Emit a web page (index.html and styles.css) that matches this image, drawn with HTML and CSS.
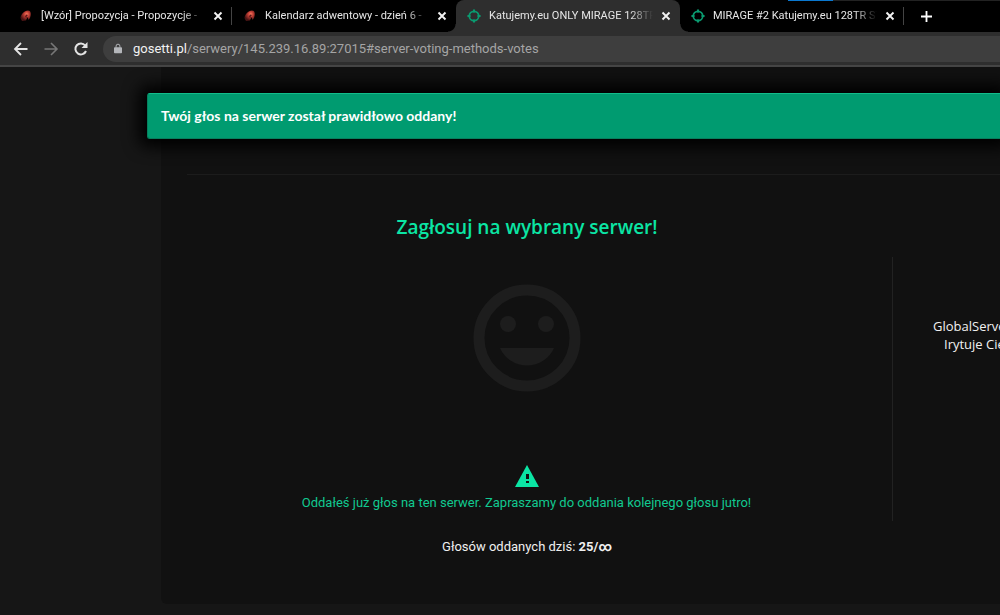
FILE: index.html
```html
<!DOCTYPE html>
<html lang="pl">
<head>
<meta charset="utf-8">
<title>Katujemy.eu ONLY MIRAGE 128TR</title>
<link rel="stylesheet" href="styles.css">
</head>
<body>
<svg class="sprite" aria-hidden="true">
  <defs>
    <radialGradient id="ember" cx="0.6" cy="0.35" r="0.6">
      <stop offset="0" stop-color="#ff7a60"/>
      <stop offset="0.45" stop-color="#b83a32"/>
      <stop offset="1" stop-color="#4a1414"/>
    </radialGradient>
    <symbol id="flame" viewBox="0 0 14 14">
      <path d="M1.500 9C2 5 5 2 9 1.500C12 1.500 12.500 5 11 9L9.500 11L8.500 8L7 11.500L3 12Z" fill="url(#ember)"/>
      <path d="M7 5.500L9 6L7.500 7.500L8 9L6 8Z" fill="#5a1818"/>
    </symbol>
    <symbol id="target" viewBox="0 0 16 16">
      <circle cx="8" cy="8" r="5.400" fill="none" stroke="#0a9b70" stroke-width="2"/>
      <path d="M8 0.500V4M8 12V15.500M0.500 8H4M12 8H15.500" stroke="#0a9b70" stroke-width="2.400"/>
    </symbol>
    <symbol id="close" viewBox="0 0 10 10">
      <path d="M1.500 1.500L8.500 8.500M8.500 1.500L1.500 8.500" stroke="#f2f2f2" stroke-width="1.900"/>
    </symbol>
  </defs>
</svg>

<header class="browser">
  <nav class="tabs" aria-label="Karty">
    <div class="tab">
      <svg class="favicon"><use href="#flame"/></svg>
      <a class="tab-title" href="#t1">[Wzór] Propozycja - Propozycje -</a>
      <button class="close" aria-label="Zamknij kartę"><svg><use href="#close"/></svg></button>
    </div>
    <div class="tab tab-before-active">
      <svg class="favicon"><use href="#flame"/></svg>
      <a class="tab-title" href="#t2">Kalendarz adwentowy - dzień 6 -</a>
      <button class="close" aria-label="Zamknij kartę"><svg><use href="#close"/></svg></button>
    </div>
    <div class="tab tab-active">
      <svg class="favicon"><use href="#target"/></svg>
      <a class="tab-title" href="#t3">Katujemy.eu ONLY MIRAGE 128TR</a>
      <button class="close" aria-label="Zamknij kartę"><svg><use href="#close"/></svg></button>
    </div>
    <div class="tab">
      <svg class="favicon"><use href="#target"/></svg>
      <a class="tab-title" href="#t4">MIRAGE #2 Katujemy.eu 128TR ST</a>
      <button class="close" aria-label="Zamknij kartę"><svg><use href="#close"/></svg></button>
    </div>
    <button class="new-tab" aria-label="Nowa karta">
      <svg viewBox="0 0 12 12"><path d="M6 0V12M0 6H12" stroke="#fff" stroke-width="2"/></svg>
    </button>
    <span class="window-edge"></span>
  </nav>
  <div class="toolbar">
    <button class="nav-button" aria-label="Wstecz">
      <svg viewBox="0 0 16 16"><path d="M14.500 8H2.500M8 2L2 8L8 14" fill="none" stroke="#e4e4e4" stroke-width="1.800"/></svg>
    </button>
    <button class="nav-button" aria-label="Dalej">
      <svg viewBox="0 0 16 16"><path d="M1.500 8H13.500M8 2L14 8L8 14" fill="none" stroke="#777" stroke-width="1.600"/></svg>
    </button>
    <button class="nav-button" aria-label="Odśwież">
      <svg viewBox="0 0 16 16"><path d="M13 10A5.500 5.500 0 1 1 12.200 4.500" fill="none" stroke="#e4e4e4" stroke-width="2"/><path d="M14.500 1V7H8.500Z" fill="#e4e4e4"/></svg>
    </button>
    <div class="address">
      <svg class="lock" viewBox="0 0 10 12"><path d="M1 4.500H9A1 1 0 0 1 10 5.500V11A1 1 0 0 1 9 12H1A1 1 0 0 1 0 11V5.500A1 1 0 0 1 1 4.500Z" fill="#b4b6ba"/><path d="M2.600 5V3A2.400 2.400 0 0 1 7.400 3V5" fill="none" stroke="#b4b6ba" stroke-width="1.200"/></svg>
      <a class="url" href="#server-voting-methods-votes"><span class="host">gosetti.pl</span>/serwery/145.239.16.89:27015#server-voting-methods-votes</a>
    </div>
  </div>
</header>

<main class="page">
  <div class="toast" role="status">Twój głos na serwer został prawidłowo oddany!</div>
  <section class="panel">
    <hr class="rule">
    <div class="columns">
      <div class="vote">
        <h1 class="title">Zagłosuj na wybrany serwer!</h1>
        <div class="vote-body">
          <svg class="smile" viewBox="0 0 108 108" aria-hidden="true">
            <circle cx="54" cy="54" r="48" fill="none" stroke="#1d1d1d" stroke-width="11"/>
            <circle cx="35" cy="40" r="8" fill="#1d1d1d"/>
            <circle cx="73" cy="40" r="8" fill="#1d1d1d"/>
            <path d="M27 64H81A29.500 29.500 0 0 1 27 64Z" fill="#1d1d1d"/>
          </svg>
          <svg class="warning" viewBox="0 0 24 22" aria-hidden="true">
            <path d="M12 0L24 22H0Z" fill="#0be5a4"/>
            <path d="M11 9H14V14H11ZM11 16H14V18H11Z" fill="#111"/>
          </svg>
          <p class="notice">Oddałeś już głos na ten serwer. Zapraszamy do oddania kolejnego głosu jutro!</p>
        </div>
        <p class="count">Głosów oddanych dziś: <strong>25/∞</strong></p>
      </div>
      <aside class="ad">
        <p>GlobalServe</p>
        <p class="ad-second">Irytuje Cię</p>
      </aside>
    </div>
  </section>
</main>
</body>
</html>
```
FILE: styles.css
```css
* { box-sizing: border-box; }
body {
  margin: 0;
  min-height: 100vh;
  display: flex;
  flex-direction: column;
  overflow: hidden;
  background: #161616;
  color: #f0f0f0;
  font: 13px/18px Roboto, "Noto Sans", sans-serif;
}
button { border: 0; padding: 0; background: none; }
a { color: inherit; text-decoration: none; }
p { margin: 0; }
svg { display: block; }
.sprite { position: absolute; width: 0; height: 0; }

.tabs {
  position: relative;
  display: flex;
  height: 32px;
  padding-left: 8px;
  background: #000;
}
.tab {
  position: relative;
  flex: 0 1 224px;
  min-width: 0;
  display: flex;
  align-items: center;
  gap: 8px;
  padding: 0 9px 0 11px;
}
.tab::after {
  content: "";
  position: absolute;
  right: 0;
  top: 7px;
  width: 1px;
  height: 18px;
  background: #444;
}
.tab-before-active::after, .tab-active::after { display: none; }
.tab-active { background: #2e2e2e; border-radius: 8px 8px 0 0; }
.tab-active::before {
  content: "";
  position: absolute;
  left: -8px;
  right: -8px;
  bottom: 0;
  height: 8px;
  background:
    radial-gradient(circle at 0 0, #000 7px, #2e2e2e 8px) left / 8px 8px no-repeat,
    radial-gradient(circle at 100% 0, #000 7px, #2e2e2e 8px) right / 8px 8px no-repeat;
}
.favicon { flex: none; width: 14px; height: 14px; }
.tab-title {
  flex: 1;
  min-width: 0;
  overflow: hidden;
  white-space: nowrap;
  font-size: 11px;
  line-height: 20px;
  color: #e6e6e6;
  -webkit-mask-image: linear-gradient(90deg, #000 86%, transparent 100%);
  mask-image: linear-gradient(90deg, #000 86%, transparent 100%);
}
.close svg { width: 10px; height: 10px; }
.new-tab { padding: 0 17px; }
.new-tab svg { width: 11px; height: 11px; }
.window-edge {
  position: absolute;
  top: 0;
  left: 788px;
  right: 0;
  height: 1px;
  background: linear-gradient(90deg, #0a78d0 45px, #222 45px);
}

.toolbar {
  display: flex;
  align-items: center;
  gap: 14px;
  height: 35px;
  padding-left: 13px;
  background: #2e2e2e;
  border-bottom: 2px solid #454545;
}
.nav-button svg { width: 16px; height: 16px; }
.address {
  flex: 1;
  display: flex;
  align-items: center;
  gap: 11px;
  height: 26px;
  padding-left: 11px;
  border-radius: 13px 0 0 13px;
  background: #3e3e3e;
}
.lock { width: 8px; height: 11px; }
.url { font-size: 13px; line-height: 20px; color: #a5a5a5; white-space: nowrap; }
.host { color: #f2f2f2; }

.page {
  position: relative;
  flex: 1;
  padding: 0 0 11px 161px;
}
.toast {
  position: absolute;
  z-index: 1;
  top: 26px;
  left: 147px;
  right: 0;
  padding: 13px;
  border: 1px solid #067f5d;
  border-top-color: #12bd8c;
  border-right: 0;
  border-radius: 3px 0 0 3px;
  background: #009b70;
  box-shadow: 0 0 16px 8px #000;
  color: #fff;
  font: 700 14px/18px Lato, "Noto Sans", sans-serif;
}
.panel {
  padding: 107px 0 48px;
  border-radius: 0 0 0 6px;
  background: #111;
}
.rule { margin: 0 0 0 26px; border: 0; border-top: 1px solid #1c1c1c; }
.columns { display: flex; padding-top: 39px; }
.vote { flex: 1; text-align: center; }
.title {
  margin: 0;
  font: 600 19px/26px "Open Sans", sans-serif;
  color: #0be5a4;
}
.vote-body {
  display: flex;
  flex-direction: column;
  align-items: center;
  margin-top: 17px;
  padding: 27px 0 9px;
  border-right: 1px solid #222;
}
.smile { width: 108px; height: 108px; }
.warning { width: 24px; height: 22px; margin-top: 73px; }
.notice { margin-top: 7px; color: #11c990; }
.count { margin-top: 17px; }
.ad {
  flex: 0 0 107px;
  padding: 103px 0 0 40px;
  overflow: hidden;
  white-space: nowrap;
  font-family: "Open Sans", sans-serif;
}
.ad-second { padding-left: 11px; }
```
